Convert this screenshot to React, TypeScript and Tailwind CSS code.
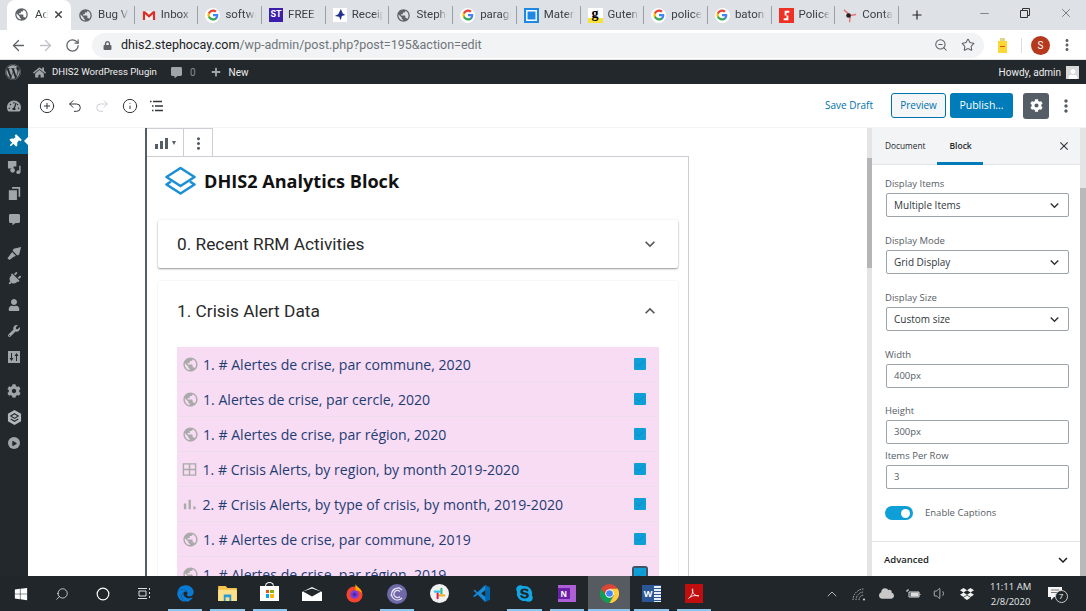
import React from "react";
import {
  FaTachometerAlt, FaThumbtack, FaCommentAlt, FaPlug, FaUser, FaWrench, FaCog, FaPlay, FaHome, FaWordpress, FaPlus,
  FaEdge, FaWindows, FaDropbox, FaCloud, FaSkype, FaLock,
} from "react-icons/fa";
import { MdPublic, MdExpandMore, MdExpandLess, MdClose, MdMoreVert } from "react-icons/md";
import { ArrowLeft, ArrowRight, RotateCw, ZoomOut, Star, CirclePlus, Undo2, Redo2, Info, Search, Circle, Minus, X, Plus, ChevronUp, Volume1, Check } from "lucide-react";

const chromeFont = "font-['Roboto','Open_Sans',sans-serif]";

function GIcon() {
  return (
    <span className="flex h-[15px] w-[15px] shrink-0 items-center justify-center rounded-full bg-white">
      <svg viewBox="0 0 24 24" width="12" height="12">
        <path fill="#4285F4" d="M22.6 12.3c0-.8-.1-1.5-.2-2.3H12v4.300h5.900c-.3 1.400-1 2.500-2.200 3.300v2.800h3.600c2.100-1.900 3.300-4.800 3.300-8.100z" />
        <path fill="#34A853" d="M12 23c3 0 5.500-1 7.300-2.700l-3.600-2.800c-1 .7-2.200 1.100-3.700 1.100-2.900 0-5.300-1.900-6.200-4.500H2.100v2.900C3.900 19.600 7.700 23 12 23z" />
        <path fill="#FBBC05" d="M5.800 14.100c-.5-1.400-.5-2.800 0-4.200V7H2.100c-1.500 3-1.500 7 0 10l3.700-2.900z" />
        <path fill="#EA4335" d="M12 5.400c1.600 0 3.100.6 4.200 1.700l3.200-3.200C17.500 2.100 15 1 12 1 7.700 1 3.900 4.400 2.100 7l3.700 2.900C6.700 7.300 9.100 5.400 12 5.400z" />
      </svg>
    </span>
  );
}

function Globe() {
  return <MdPublic className="shrink-0 text-[#5f6368]" size={15} />;
}

const tabs: { icon: React.ReactNode; text: string }[] = [
  { icon: <Globe />, text: "Bug Ve" },
  { icon: <svg viewBox="0 0 16 12" width="14" height="11" className="shrink-0"><path fill="#f1f1f1" d="M1 1h14v10H1z" /><path fill="#d93025" d="M1 1h2.500L8 5l4.500-4H15v10h-2.500V4.500L8 8.500l-4.500-4V11H1z" /></svg>, text: "Inbox (" },
  { icon: <GIcon />, text: "softwa" },
  { icon: <span className="flex h-[14px] w-[14px] shrink-0 items-center justify-center bg-[#3c1fa8] text-[9px] font-bold text-white">ST</span>, text: "FREE 8" },
  { icon: <svg viewBox="0 0 16 16" width="14" height="14" className="shrink-0"><path fill="#fff" d="M0 0h16v16H0z" /><path fill="#23308f" d="M9 1l2 5 3 2-4 1-1 5-2-4-5-1 4-2z" /></svg>, text: "Receip" },
  { icon: <Globe />, text: "Stepho" },
  { icon: <GIcon />, text: "paragr" },
  { icon: <svg viewBox="0 0 16 16" width="15" height="15" className="shrink-0"><path fill="#1e88e5" d="M0 0h16v16H0z" /><path fill="none" stroke="#fff" strokeWidth="1.500" d="M3 3h10v10H3z" /></svg>, text: "Materi" },
  { icon: <span className="flex h-[15px] w-[15px] shrink-0 items-start justify-center bg-[linear-gradient(#fff_70%,#f5e23a_70%)] font-['Liberation_Serif',serif] text-[14px] leading-[12px] font-bold text-black">g</span>, text: "Gutenl" },
  { icon: <GIcon />, text: "police" },
  { icon: <GIcon />, text: "baton" },
  { icon: <svg viewBox="0 0 16 16" width="15" height="15" className="shrink-0"><path fill="#ee3124" d="M0 0h16v16H0z" /><path fill="none" stroke="#fff" strokeWidth="2" d="M11 4H7v4M5 12h4V8" /></svg>, text: "Police" },
  { icon: <svg viewBox="0 0 16 16" width="15" height="15" className="shrink-0"><path fill="none" stroke="#e57373" strokeWidth="1.500" d="M2 2l7 6 6-1M9 8l-1 7" /><circle cx="7" cy="8" r="2.500" fill="#222" /></svg>, text: "Contac" },
];

function Tab({ icon, text }: { icon: React.ReactNode; text: string }) {
  return (
    <div className="flex h-[18px] w-[63.700px] shrink-0 items-center gap-[5px] border-r border-[#9aa0a6] pl-[7px]">
      {icon}
      <span className="w-[31px] overflow-hidden whitespace-nowrap text-[11.500px] text-[#3c4043] [mask-image:linear-gradient(to_right,#000_70%,transparent)]">{text}</span>
    </div>
  );
}

function ChromeBar() {
  return (
    <div className={chromeFont}>
      <div className="flex h-[30px] items-center bg-[#dee1e6]">
        <div className="ml-[7px] flex h-[30px] w-[64px] shrink-0 items-center rounded-t-[8px] bg-white pb-[1px] pl-[7px] text-[#3c4043]">
          <Globe />
          <span className="ml-[6px] w-[13px] overflow-hidden whitespace-nowrap text-[11.500px] [mask-image:linear-gradient(to_right,#000_60%,transparent)]">Ad</span>
          <X size={11} strokeWidth={3} className="ml-[5px] text-[#3c4043]" />
        </div>
        <div className="flex items-center">
          {tabs.map((t, i) => (
            <Tab key={i} icon={t.icon} text={t.text} />
          ))}
        </div>
        <Plus size={14} strokeWidth={2} className="ml-[11px] text-[#222]" />
        <div className="ml-auto flex items-center gap-[29px] self-start pt-[6px] pr-[13px] text-[#333]">
          <Minus size={13} strokeWidth={1} />
          <svg width="10" height="10" viewBox="0 0 10 10" fill="none" stroke="#333"><path d="M.5 2.500h7v7h-7zM2.500 2.500V.5h7v7h-2" /></svg>
          <X size={14} strokeWidth={1} />
        </div>
      </div>
      <div className="flex h-[30px] items-center border-b border-[#e4e4e4] bg-white pt-[1px]">
        <div className="flex w-[92px] shrink-0 items-center gap-[10px] pl-[10px]">
          <ArrowLeft size={17} strokeWidth={1.800} className="text-[#5f6368]" />
          <ArrowRight size={17} strokeWidth={1.800} className="text-[#bdc1c6]" />
          <RotateCw size={15} strokeWidth={2} className="ml-[1px] text-[#5f6368]" />
        </div>
        <div className="flex h-[25px] w-[892px] shrink-0 items-center rounded-full bg-[#f1f3f4] pr-[9px] pl-[11px]">
          <FaLock size={9} className="text-[#5f6368]" />
          <span className="ml-[9px] text-[12.500px] whitespace-nowrap text-[#202124]">
            dhis2.stephocay.com<span className="text-[#70757a]">/wp-admin/post.php?post=195&amp;action=edit</span>
          </span>
          <ZoomOut size={14} strokeWidth={1.800} className="ml-auto text-[#5f6368]" />
          <Star size={14} strokeWidth={1.800} className="ml-[13px] text-[#5f6368]" />
        </div>
        <div className="flex flex-1 items-center pl-[14px]">
          <svg viewBox="0 0 9 15" width="9" height="15"><path fill="#fdd835" d="M0 3h9v12H0z" /><path fill="#e0d38a" d="M2 0h5v3H2z" /><path fill="#e65100" d="M2 8h5v1H2z" /></svg>
          <span className="ml-[14px] h-[15px] w-[1px] bg-[#dadce0]" />
          <span className="ml-[9px] flex h-[19px] w-[19px] items-center justify-center rounded-full bg-[#b5391c] text-[10px] text-white">S</span>
          <MdMoreVert size={18} className="ml-[8px] text-[#5f6368]" />
        </div>
      </div>
    </div>
  );
}

function AdminBar() {
  return (
    <div className="flex h-[24px] items-center bg-[#23282d] font-['Roboto',sans-serif] text-[10px] text-[#eeeeee]">
      <FaWordpress size={16} className="ml-[5px] text-[#a0a5aa]" />
      <FaHome size={13} className="ml-[12px] text-[#a0a5aa]" />
      <span className="ml-[6px] text-[9.600px]">DHIS2 WordPress Plugin</span>
      <FaCommentAlt size={11} className="ml-[14px] text-[#a0a5aa]" />
      <span className="ml-[8px] text-[#8a8f94]">0</span>
      <FaPlus size={10} className="ml-[15px] text-[#a0a5aa]" />
      <span className="ml-[8px]">New</span>
      <span className="ml-auto">Howdy, admin</span>
      <span className="mr-[7px] ml-[5px] flex h-[13px] w-[13px] items-end justify-center bg-[#d8d8d8]">
        <FaUser size={10} className="text-white" />
      </span>
    </div>
  );
}

function Hex() {
  return (
    <svg viewBox="0 0 16 16" width="15" height="15">
      <path fill="#b4b8bc" d="M8 0l7 4v8l-7 4-7-4V4z" />
      <path fill="none" stroke="#23282d" strokeWidth="1.200" d="M8 4l4 2.500L8 9 4 6.500zM4 9.500L8 12l4-2.500" />
    </svg>
  );
}

function SideItem({ children, active, className }: { children: React.ReactNode; active?: boolean; className?: string }) {
  return (
    <div className={`relative flex h-[26px] items-center justify-center ${active ? "bg-[#0073aa] text-white" : "text-[#a0a5aa]"} ${className ?? ""}`}>
      {children}
      {active && <span className="absolute top-[9px] right-0 h-0 w-0 border-y-[4px] border-r-[4px] border-y-transparent border-r-white" />}
    </div>
  );
}

function WpSidebar() {
  return (
    <div className="w-[28px] shrink-0 bg-[#23282d] pt-[9px]">
      <SideItem><FaTachometerAlt size={14} /></SideItem>
      <SideItem active className="mt-[9px]"><FaThumbtack size={13} className="rotate-45" /></SideItem>
      <SideItem>
        <svg viewBox="0 0 16 16" width="15" height="15" fill="#a0a5aa"><path d="M1 1h9v6H7v2H1z" /><circle cx="6" cy="11" r="2.500" /><circle cx="12" cy="13" r="2" /><path d="M13 6h1.500v7H13z" /></svg>
      </SideItem>
      <SideItem>
        <svg viewBox="0 0 16 16" width="13" height="13" fill="#a0a5aa"><path d="M5 0h10v12h-2V2H5z" /><path d="M1 4h10v12H1z" /></svg>
      </SideItem>
      <SideItem><FaCommentAlt size={11} /></SideItem>
      <SideItem className="mt-[8px]">
        <svg viewBox="0 0 16 16" width="15" height="15" fill="#a0a5aa"><path d="M7 3l8-2-2 8-2 1-5-5z" /><path d="M5.500 6.500l4 4-3 1.500-4 3-2-2 3-4z" /></svg>
      </SideItem>
      <SideItem><FaPlug size={14} className="rotate-45" /></SideItem>
      <SideItem><FaUser size={12} /></SideItem>
      <SideItem><FaWrench size={12} /></SideItem>
      <SideItem>
        <svg viewBox="0 0 12 12" width="12" height="12"><path fill="#a0a5aa" d="M0 0h12v12H0z" /><path fill="#23282d" d="M3 2h1v5h1.500L3.500 10l-2-3H3zM8 10h1V5h1.500l-2-3-2 3H8z" /></svg>
      </SideItem>
      <SideItem className="mt-[8px]"><FaCog size={14} /></SideItem>
      <SideItem><Hex /></SideItem>
      <SideItem>
        <span className="flex h-[12px] w-[12px] items-center justify-center rounded-full bg-[#a0a5aa]">
          <FaPlay size={5} className="text-[#23282d]" />
        </span>
      </SideItem>
    </div>
  );
}

function EditorHeader() {
  return (
    <div className="flex h-[44px] shrink-0 items-center border-b border-[#f3f4f5] bg-white font-['Open_Sans',sans-serif] text-[10px]">
      <div className="flex items-center gap-[11.500px] pl-[11px] text-[#32373c]">
        <CirclePlus size={16} strokeWidth={1.500} />
        <Undo2 size={16} strokeWidth={1.500} />
        <Redo2 size={16} strokeWidth={1.500} className="text-[#ccd0d4]" />
        <Info size={16} strokeWidth={1.500} />
        <svg viewBox="0 0 16 16" width="16" height="16" fill="none" stroke="#32373c" strokeWidth="1.300">
          <path d="M1 3.500h1.500M4 3.500h9M3 8h1.500M6 8h8M3 12.500h1.500M6 12.500h8" />
        </svg>
      </div>
      <span className="ml-auto text-[#0073aa]">Save Draft</span>
      <button className="ml-[18px] h-[25px] w-[55px] rounded-[3px] border border-[#0073aa] bg-[#f3f5f6] text-[#0073aa]">Preview</button>
      <button className="ml-[4px] h-[25px] w-[63px] rounded-[3px] bg-[#007cba] text-[10.500px] text-white">Publish...</button>
      <span className="ml-[10px] flex h-[26px] w-[26px] items-center justify-center rounded-[3px] bg-[#555d66] text-white">
        <FaCog size={13} />
      </span>
      <MdMoreVert size={20} className="mr-[10px] ml-[7px] text-[#555d66]" />
    </div>
  );
}

function TableIcon() {
  return (
    <svg viewBox="0 0 16 16" width="15" height="15" className="shrink-0" fill="none" stroke="#aaaaaa" strokeWidth="1.500">
      <path d="M1.500 2h13v12h-13zM8 2v12M1.500 8h13" />
    </svg>
  );
}

function BarsIcon() {
  return (
    <svg viewBox="0 0 16 16" width="15" height="15" className="shrink-0" fill="#aaaaaa">
      <path d="M2 7h2.500v6H2zM7 3h2.500v10H7zM12 10h2.500v3H12z" />
    </svg>
  );
}

const rows: { kind: "g" | "t" | "b"; text: string }[] = [
  { kind: "g", text: "1. # Alertes de crise, par commune, 2020" },
  { kind: "g", text: "1. Alertes de crise, par cercle, 2020" },
  { kind: "g", text: "1. # Alertes de crise, par région, 2020" },
  { kind: "t", text: "1. # Crisis Alerts, by region, by month 2019-2020" },
  { kind: "b", text: "2. # Crisis Alerts, by type of crisis, by month, 2019-2020" },
  { kind: "g", text: "1. # Alertes de crise, par commune, 2019" },
  { kind: "g", text: "1. # Alertes de crise, par région, 2019" },
];

function Row({ kind, text, last }: { kind: string; text: string; last: boolean }) {
  return (
    <div className="flex h-[35px] shrink-0 items-center border-b border-[#ebdde9] pr-[13px] pl-[5px]">
      {kind === "g" ? <MdPublic size={17} className="shrink-0 text-[#aaaaaa]" /> : kind === "t" ? <TableIcon /> : <BarsIcon />}
      <span className={`${kind === "g" ? "ml-[4px]" : "ml-[5.500px]"} pt-[2px] font-['Open_Sans',sans-serif] text-[14.100px] whitespace-nowrap text-[#1f3d73]`}>{text}</span>
      <span className={`ml-auto flex h-[12px] w-[12px] shrink-0 items-center justify-center rounded-[1px] bg-[#0e9fd8] ${last ? "outline-2 outline-[#3d5566]" : ""}`}>
        <Check size={10} strokeWidth={2} className="text-[#1685b5]" />
      </span>
    </div>
  );
}

function Logo() {
  return (
    <svg viewBox="0 0 32 30" width="33" height="30" className="shrink-0" fill="none" stroke="#1a8fd6" strokeWidth="2.600" strokeLinejoin="round">
      <path d="M16 2L30 11 16 20 2 11z" />
      <path d="M6.500 15.500L2 18.500 16 27.500 30 18.500 25.500 15.500" />
    </svg>
  );
}

function Canvas() {
  return (
    <div className="flex min-w-0 flex-1 justify-start overflow-hidden bg-white pl-[117px]">
      <div className="flex w-[544px] shrink-0 flex-col border-l-2 border-[#555d66]">
        <div className="flex h-[28px] shrink-0">
          <div className="flex h-[29px] w-[66px] border-t border-r border-[#ccd0d4] bg-white">
            <div className="flex w-[37px] items-center justify-center gap-[4px] border-r border-[#ccd0d4]">
              <svg viewBox="0 0 13 11" width="13" height="11" fill="#555d66"><path d="M0 6h3v5H0zM5 3h3v8H5zM10 0h3v11h-3z" /></svg>
              <span className="h-0 w-0 border-x-[2.500px] border-t-[4px] border-x-transparent border-t-[#555d66]" />
            </div>
            <div className="flex flex-1 items-center justify-center text-[#555d66]">
              <MdMoreVert size={19} />
            </div>
          </div>
        </div>
        <div className="flex min-h-0 flex-1 flex-col border-t border-r border-[#ccd0d4]">
          <div className="flex h-[48px] shrink-0 items-center gap-[7px] pl-[17px]">
            <Logo />
            <h1 className="pt-[2px] font-['Open_Sans',sans-serif] text-[18.100px] font-bold text-[#111]">DHIS2 Analytics Block</h1>
          </div>
          <div className="mt-[15px] mr-[10px] ml-[11px] flex flex-col gap-[13px] font-['Roboto',sans-serif]">
            <div className="flex h-[48px] items-center rounded-[2px] bg-white pr-[18px] pl-[19px] shadow-[0_1px_2px_rgba(0,0,0,0.4),0_0_2px_rgba(0,0,0,0.08)]">
              <span className="pt-[2px] text-[17.300px] text-[#2a2a2a]">0. Recent RRM Activities</span>
              <MdExpandMore size={20} className="ml-auto text-[#555]" />
            </div>
            <div className="flex h-[400px] flex-col rounded-[2px] bg-white px-[19px] shadow-[0_0_2px_rgba(0,0,0,0.12)]">
              <div className="flex h-[60px] shrink-0 items-center">
                <span className="pt-[2px] text-[17.300px] text-[#2a2a2a]">1. Crisis Alert Data</span>
                <MdExpandLess size={20} className="mr-[-1px] ml-auto text-[#555]" />
              </div>
              <div className="mt-[6px] flex flex-col bg-[#f7dcf3]">
                {rows.map((r, i) => (
                  <Row key={i} kind={r.kind} text={r.text} last={i === rows.length - 1} />
                ))}
              </div>
            </div>
          </div>
        </div>
      </div>
    </div>
  );
}

function Field({ label, value, select, mt }: { label: string; value: string; select?: boolean; mt: string }) {
  return (
    <div className={mt}>
      <div className="mb-[3px] h-[13px] text-[9.500px] leading-[13px] text-[#555d66]">{label}</div>
      <div className={`ml-[1px] flex h-[24px] w-[183px] items-center rounded-[2px] border border-[#9ca3a9] bg-white pr-[5px] pl-[7px] ${select ? "text-[10px] text-[#32373c]" : "text-[9.500px] text-[#555d66]"}`}>
        {value}
        {select && <MdExpandMore size={17} className="ml-auto text-[#333]" />}
      </div>
    </div>
  );
}

function SidePanel() {
  return (
    <div className="flex w-[219px] shrink-0 bg-white font-['Open_Sans',sans-serif]">
      <div className="flex w-[5px] shrink-0 flex-col bg-[#e4e4e4]">
        <div className="mt-[30px] h-[110px] bg-[#b5b5b5]" />
      </div>
      <div className="flex min-w-0 flex-1 flex-col">
        <div className="flex h-[37px] shrink-0 items-center border-b border-[#e2e4e7] bg-[#f3f4f5] text-[8.300px] text-[#23282d]">
          <span className="ml-[13px]">Document</span>
          <span className="relative ml-[24px] text-[8.500px] font-semibold">
            Block
            <span className="absolute top-[22px] -right-[11px] -left-[12px] h-[3px] bg-[#007cba]" />
          </span>
          <MdClose size={14} className="mr-[9px] ml-auto text-[#32373c]" />
        </div>
        <div className="flex flex-1 flex-col pt-[12px] pl-[13px]">
          <Field label="Display Items" value="Multiple Items" select mt="" />
          <Field label="Display Mode" value="Grid Display" select mt="mt-[17px]" />
          <Field label="Display Size" value="Custom size" select mt="mt-[17px]" />
          <Field label="Width" value="400px" mt="mt-[17px]" />
          <Field label="Height" value="300px" mt="mt-[16px]" />
          <Field label="Items Per Row" value="3" mt="mt-[5px]" />
          <div className="mt-[17px] flex items-center">
            <span className="flex h-[14px] w-[28px] items-center justify-end rounded-full bg-[#0e9fd8] pr-[3px]">
              <span className="h-[9px] w-[9px] rounded-full bg-white" />
            </span>
            <span className="ml-[12px] text-[9.500px] text-[#555d66]">Enable Captions</span>
          </div>
          <div className="mt-[21px] -ml-[13px] flex flex-col border-t border-[#e2e4e7]">
            <div className="flex h-[33px] items-center pt-[2px] pr-[8px] pl-[12px] text-[9.500px] font-semibold text-[#191e23]">
              Advanced
              <MdExpandMore size={18} className="ml-auto text-[#191e23]" />
            </div>
          </div>
        </div>
      </div>
      <div className="flex w-[6px] shrink-0 flex-col bg-[#e4e4e4]">
        <div className="mt-[60px] flex-1 bg-[#b9b9b9]" />
      </div>
    </div>
  );
}

function SysSlot({ children }: { children: React.ReactNode }) {
  return <div className="flex h-full w-[41px] shrink-0 items-center justify-center">{children}</div>;
}

function TaskSlot({ children, open, active }: { children: React.ReactNode; open?: boolean; active?: boolean }) {
  return (
    <div className={`relative flex h-full w-[42.400px] shrink-0 items-center justify-center ${active ? "bg-[#555b60]" : ""}`}>
      {children}
      {open && <span className={`absolute bottom-0 h-[2px] bg-[#8cc4ec] ${active ? "inset-x-0" : "inset-x-[4px]"}`} />}
    </div>
  );
}

function TrayIcon({ children }: { children: React.ReactNode }) {
  return <div className="flex w-[27px] shrink-0 items-center justify-center">{children}</div>;
}

function Taskbar() {
  return (
    <div className="flex h-[35px] shrink-0 items-center bg-[#20262a] font-['Open_Sans',sans-serif] text-white">
      <SysSlot><FaWindows size={14} /></SysSlot>
      <SysSlot><Search size={14} strokeWidth={1.200} className="-scale-x-100" /></SysSlot>
      <SysSlot><Circle size={14} strokeWidth={2} /></SysSlot>
      <SysSlot>
        <svg width="14" height="13" viewBox="0 0 14 13" fill="none" stroke="#ddd"><path d="M1 1.500h9M1 11.500h9M2 4h7v5H2zM12.500 1v2M12.500 5v2M12.500 9v2" /></svg>
      </SysSlot>
      <TaskSlot open><FaEdge size={17} className="text-[#0a7bd4]" /></TaskSlot>
      <TaskSlot open>
        <svg viewBox="0 0 20 16" width="19" height="15"><path fill="#f5c24c" d="M0 0h8l2 2h10v14H0z" /><path fill="#fde08a" d="M0 4h20v12H0z" /><path fill="#2a9bd8" d="M6 9h8v7h-2v-4H8v4H6z" /></svg>
      </TaskSlot>
      <TaskSlot open>
        <span className="relative flex h-[15px] w-[19px] items-center justify-center bg-white">
          <span className="grid h-[8px] w-[8px] grid-cols-2 gap-[1px]">
            <span className="bg-[#f25022]" /><span className="bg-[#7fba00]" /><span className="bg-[#00a4ef]" /><span className="bg-[#ffb900]" />
          </span>
          <span className="absolute -top-[4px] left-[5px] h-[5px] w-[9px] rounded-t-full border border-b-0 border-white" />
        </span>
      </TaskSlot>
      <TaskSlot>
        <svg viewBox="0 0 20 14" width="20" height="14"><path fill="#fff" d="M0 5l10-5 10 5v9H0z" /><path fill="#20262a" d="M1 4.500l9 5 9-5-9-3z" /></svg>
      </TaskSlot>
      <TaskSlot>
        <svg viewBox="0 0 20 20" width="19" height="19"><circle cx="10" cy="11" r="8.500" fill="#f6442f" /><path fill="#ffb000" d="M11 0c1 3 7 5 7 11 0-3-4-5-7-4z" /><circle cx="10" cy="11" r="4.500" fill="#7a3ed6" /><circle cx="10" cy="11" r="2" fill="#4a2aa8" /></svg>
      </TaskSlot>
      <TaskSlot open>
        <svg viewBox="0 0 20 20" width="20" height="20" fill="none"><circle cx="10" cy="10" r="10" fill="#6f69a8" /><path stroke="#e4e1f2" strokeWidth="1.200" d="M15 14a6 6 0 1 1 0-8M13 12.500a3.500 3.500 0 1 1 0-5M4 12a8 8 0 0 1 9-8" /></svg>
      </TaskSlot>
      <TaskSlot>
        <svg viewBox="0 0 20 20" width="19" height="19"><circle cx="10" cy="10" r="10" fill="#f1f1f1" /><path stroke="#36c5f0" strokeWidth="2.200" strokeLinecap="round" d="M5 8h5" /><path stroke="#2eb67d" strokeWidth="2.200" strokeLinecap="round" d="M12 5v5" /><path stroke="#ecb22e" strokeWidth="2.200" strokeLinecap="round" d="M10 12h5" /><path stroke="#e01e5a" strokeWidth="2.200" strokeLinecap="round" d="M8 10v5" /></svg>
      </TaskSlot>
      <TaskSlot>
        <svg viewBox="0 0 20 20" width="19" height="19"><path fill="#0065a9" d="M14 1l5 2.500v13L14 19 6 11l-3.500 3L1 13l3.500-3.500z" /><path fill="#1a8ad4" d="M14 1v18l-8-8-3 2.500-1.500-1L5 10 1.500 7 3 6l3 3z" /><path fill="#20262a" d="M14 6.500v7L9.500 10z" /></svg>
      </TaskSlot>
      <TaskSlot open>
        <FaSkype size={19} className="text-[#12a7e4]" />
      </TaskSlot>
      <TaskSlot open>
        <span className="relative flex h-[17px] w-[18px] items-center justify-end bg-[#ad5fd6]">
          <span className="absolute top-[3px] left-0 flex h-[11px] w-[12px] items-center justify-center bg-[#6b1fa8] text-[8px] font-bold">N</span>
        </span>
      </TaskSlot>
      <TaskSlot open active>
        <svg viewBox="0 0 20 20" width="19" height="19">
          <circle cx="10" cy="10" r="10" fill="#db4437" />
          <path fill="#0f9d58" d="M1.300 5A10 10 0 0 0 10 20l4.500-8-8.500-.5z" />
          <path fill="#ffcd40" d="M10 20a10 10 0 0 0 8.700-15H10l4.500 7z" />
          <circle cx="10" cy="10" r="4.500" fill="#fff" /><circle cx="10" cy="10" r="3.500" fill="#4285f4" />
        </svg>
      </TaskSlot>
      <TaskSlot open>
        <span className="relative flex h-[17px] w-[19px] items-center justify-end">
          <span className="h-[17px] w-[14px] bg-[#e8eef8] bg-[repeating-linear-gradient(#2b5797_0_1px,#e8eef8_1px_3px)]" />
          <span className="absolute top-0 left-0 flex h-[17px] w-[12px] items-center justify-center bg-[#2b5797] text-[9px] font-bold">W</span>
        </span>
      </TaskSlot>
      <TaskSlot open>
        <span className="flex h-[19px] w-[18px] items-center justify-center bg-[#c00e0e]">
          <svg viewBox="0 0 16 16" width="13" height="13" fill="none" stroke="#fff" strokeWidth="1"><path d="M2 14c3-2 6-8 5-11 0-2-1 0 0 3s4 5 7 5-4-1-7 0-4 2-5 3z" /></svg>
        </span>
      </TaskSlot>
      <div className="ml-[103.500px] flex items-center text-[#d9d9d9]">
        <TrayIcon><ChevronUp size={16} strokeWidth={1.200} /></TrayIcon>
        <TrayIcon>
          <svg width="16" height="14" viewBox="0 0 16 14" fill="none" stroke="#bbb" strokeWidth="1" strokeDasharray="1.500 1"><path d="M2 13a11 11 0 0 1 11-11M5 13a8 8 0 0 1 8-8M8 13a5 5 0 0 1 5-5" /><circle cx="13" cy="12.500" r="1" fill="#ddd" stroke="none" /></svg>
        </TrayIcon>
        <TrayIcon><FaCloud size={15} className="text-[#c8c8c8]" /></TrayIcon>
        <TrayIcon>
          <svg width="15" height="12" viewBox="0 0 15 12" fill="none" stroke="#ddd"><path d="M3 4h10v5H3z" /><path d="M3 2H1v2M14 6v1" /><path fill="#ddd" d="M5 5h7v3H5z" /></svg>
        </TrayIcon>
        <TrayIcon><Volume1 size={15} strokeWidth={1.200} /></TrayIcon>
        <TrayIcon><FaDropbox size={14} className="text-[#f0f0f0]" /></TrayIcon>
      </div>
      <div className="flex w-[60px] shrink-0 flex-col items-center text-[9.500px] leading-[15px] text-[#e8e8e8]">
        <span>11:11 AM</span>
        <span>2/8/2020</span>
      </div>
      <div className="relative ml-[7px] flex h-[20px] w-[20px] items-center">
        <svg viewBox="0 0 14 14" width="14" height="14"><path fill="#f5f5f5" d="M0 0h14v10H6l-3 3v-3H0z" /><path stroke="#777" d="M3 3h8M3 5.500h8" /></svg>
        <span className="absolute top-[6px] left-[7px] flex h-[13px] w-[13px] items-center justify-center rounded-full border border-[#ccc] bg-[#20262a] text-[8px]">7</span>
      </div>
    </div>
  );
}

export default function App() {
  return (
    <div className="flex h-[611px] w-[1086px] flex-col overflow-hidden bg-white">
      <ChromeBar />
      <AdminBar />
      <div className="flex min-h-0 flex-1">
        <WpSidebar />
        <div className="flex min-w-0 flex-1 flex-col">
          <EditorHeader />
          <div className="flex min-h-0 flex-1">
            <Canvas />
            <SidePanel />
          </div>
        </div>
      </div>
      <Taskbar />
    </div>
  );
}
